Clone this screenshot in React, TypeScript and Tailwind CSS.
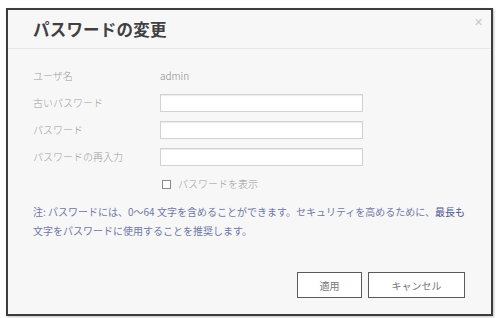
import React from "react";

const font = { fontFamily: '"Noto Sans CJK JP", "Noto Sans", sans-serif' };

function Field() {
  return (
    <div className="h-[18px] w-[203px] border border-[#d2d2d2] bg-white shadow-[inset_0_1px_1px_rgba(0,0,0,0.08)]" />
  );
}

export default function App() {
  return (
    <div className="w-[496px] h-[318px] bg-white pt-[8px] pl-[6px]" style={font}>
      <div className="w-[487px] h-[308px] border-2 border-[#3c3c3c] bg-[#f7f7f7] flex flex-col shadow-[1px_1px_2px_rgba(0,0,0,0.25)]">
        <div className="h-[39px] shrink-0 border-b border-[#e6e6e6] flex items-center pl-[25px] pr-[8px] justify-between">
          <div className="text-[16.5px] font-bold text-[#404040] leading-none tracking-[0.2px] mt-[1px]">パスワードの変更</div>
          <div className="text-[#c8c8c8] text-[11px] leading-none -mt-[16px]">✕</div>
        </div>
        <div className="flex-1 flex flex-col pl-[25px] pt-[18px]">
          <div className="grid grid-cols-[127px_1fr] gap-y-[9px] text-[10px] text-[#9a9a9a] font-light leading-none">
            <div className="h-[18px] flex items-center">ユーザ名</div>
            <div className="h-[18px] flex items-center text-[#888]">admin</div>
            <div className="h-[18px] flex items-center">古いパスワード</div>
            <Field />
            <div className="h-[18px] flex items-center">パスワード</div>
            <Field />
            <div className="h-[18px] flex items-center">パスワードの再入力</div>
            <Field />
            <div className="h-[18px]" />
            <div className="h-[18px] flex items-center gap-[7px] pl-[2px]">
              <div className="w-[9px] h-[9px] border border-[#8a8a8a] bg-white" />
              <span>パスワードを表示</span>
            </div>
          </div>
          <div className="mt-[9px] text-[10px] leading-[19px] text-[#7078a8] pr-[20px]">
            <div>注: パスワードには、0～64 文字を含めることができます。セキュリティを高めるために、<span className="text-[#4a5590]">最長も</span></div>
            <div>文字をパスワードに使用することを推奨します。</div>
          </div>
          <div className="flex justify-end gap-[6px] mt-[32px] pr-[26px]">
            <div className="w-[65px] h-[26px] border border-[#5a5a5a] bg-white flex items-center justify-center text-[10px] text-[#777]">適用</div>
            <div className="w-[97px] h-[26px] border border-[#5a5a5a] bg-white flex items-center justify-center text-[10px] text-[#777]">キャンセル</div>
          </div>
        </div>
      </div>
    </div>
  );
}
